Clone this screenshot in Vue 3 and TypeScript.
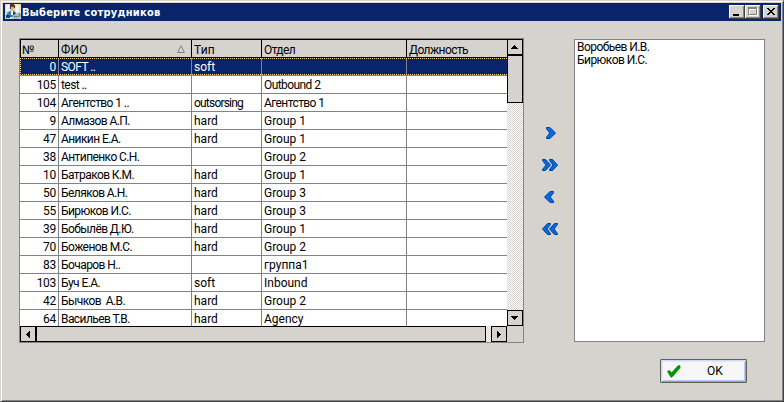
<script setup lang="ts">
import { ref } from 'vue'

interface Employee {
  id: number
  name: string
  kind: string
  unit: string
}

const employees: Employee[] = [
  { id: 0, name: 'SOFT ..', kind: 'soft', unit: '' },
  { id: 105, name: 'test ..', kind: '', unit: 'Outbound 2' },
  { id: 104, name: 'Агентство 1 ..', kind: 'outsorsing', unit: 'Агентство 1' },
  { id: 9, name: 'Алмазов А.П.', kind: 'hard', unit: 'Group 1' },
  { id: 47, name: 'Аникин Е.А.', kind: 'hard', unit: 'Group 1' },
  { id: 38, name: 'Антипенко С.Н.', kind: '', unit: 'Group 2' },
  { id: 10, name: 'Батраков К.М.', kind: 'hard', unit: 'Group 1' },
  { id: 50, name: 'Беляков А.Н.', kind: 'hard', unit: 'Group 3' },
  { id: 55, name: 'Бирюков И.С.', kind: 'hard', unit: 'Group 3' },
  { id: 39, name: 'Бобылёв Д.Ю.', kind: 'hard', unit: 'Group 1' },
  { id: 70, name: 'Боженов М.С.', kind: 'hard', unit: 'Group 2' },
  { id: 83, name: 'Бочаров Н..', kind: '', unit: 'группа1' },
  { id: 103, name: 'Буч Е.А.', kind: 'soft', unit: 'Inbound' },
  { id: 42, name: 'Бычков  А.В.', kind: 'hard', unit: 'Group 2' },
  { id: 64, name: 'Васильев Т.В.', kind: 'hard', unit: 'Agency' },
]
const chosen = ['Воробьев И.В.', 'Бирюков И.С.']
const selectedId = ref(0)

// Longer captions are set tighter than the short ones.
const isLong = (text: string) => text.length > 7

const right = 'M.5.5H4L9.5 6 4 11.5H.5V10.2L3.8 6 .5 1.8z'
const left = 'M9.5.5H6L.5 6 6 11.5H9.5V10.2L6.2 6 9.5 1.8z'
const right2 = 'M.5.5H3.5L8.5 6 3.5 11.5H.5V10.5L4 6 .5 1.5zM7.5.5H10.5L15.5 6 10.5 11.5H7.5V10.5L11 6 7.5 1.5z'
const left2 = 'M8.5.5H5.5L.5 6 5.5 11.5H8.5V10.5L5 6 8.5 1.5zM15.5.5H12.5L7.5 6 12.5 11.5H15.5V10.5L12 6 15.5 1.5z'
const moves = [
  { label: 'add', d: right, x: 5 },
  { label: 'addAll', d: right2, x: 1 },
  { label: 'remove', d: left, x: 3 },
  { label: 'removeAll', d: left2, x: 1 },
]
</script>

<template>
  <div class="window">
    <header class="title">
      <svg class="app-icon" width="17" height="17" viewBox="0 0 17 17">
        <path fill="#d4dedf" d="M0 1h16v15H0z" />
        <path fill="#e9e0b9" d="M9 1h7v9H9z" />
        <path fill="#f5f3e8" d="M11 2h3v7h-3zM1 2h3v6H1z" />
        <path fill="#4b3e33" d="M5 1h4v1h1v3H8V4H6v2H5z" />
        <path fill="#dcb58d" d="M6 4h3v4H6z" />
        <path fill="#3b80b8" d="M2 10l3-2h4l2 2v4H2z" />
        <path fill="#174574" d="M1 12h4v3H1zM8 9h2v4H8z" />
        <path fill="#f7fbff" d="M6 8h2v4H6z" />
        <path fill="#aeb9bd" d="M8 12l6-2 2 1v3l-3 2H8z" />
        <path fill="#65777d" d="M9 13h4v1H9zM14 10h1v3h-1z" />
        <path fill="#62a354" d="M12 13h3v1h-3z" />
      </svg>
      <span class="caption">Выберите сотрудников</span>
      <button class="sys"><svg width="16" height="14" shape-rendering="crispEdges"><path d="M4 9h6v2H4z" /></svg></button>
      <button class="sys"><svg width="16" height="14" shape-rendering="crispEdges"><path fill="#fff" d="M4 3h9v8H4z" /><path fill="#848284" d="M3 2h9v8H3z" /><path fill="#fff" d="M4 4h7v5H4z" /><path fill="#d6d3ce" d="M5 5h6v4H5z" /></svg></button>
      <button class="sys close"><svg width="16" height="14" shape-rendering="crispEdges"><path d="M4 3h2v1h1v1h2V4h1V3h2v1h-1v1h-1v1H9v1h1v1h1v1h1v1h-2V9H9V8H7v1H6v1H4V9h1V8h1V7h1V6H6V5H5V4H4z" /></svg></button>
    </header>

    <main class="content">
      <section class="grid-box">
        <div class="table">
          <div class="row head">
            <span>№</span>
            <span>ФИО<svg class="sort" width="8" height="8" viewBox="0 0 8 8"><path d="M.6 7.5h6.8L4 .7z" fill="none" stroke="#848284" /></svg></span>
            <span>Тип</span><span class="tight">Отдел</span><span class="tight">Должность</span>
          </div>
          <div
            v-for="e in employees" :key="e.id" class="row"
            :class="{ selected: e.id === selectedId }" @click="selectedId = e.id"
          >
            <span class="num">{{ e.id }}</span><span class="tight">{{ e.name }}</span>
            <span :class="{ tighter: isLong(e.kind) }">{{ e.kind }}</span>
            <span :class="{ tight: isLong(e.unit) }">{{ e.unit }}</span><span></span>
          </div>
        </div>
        <div class="vbar">
          <button class="arrow"><svg width="14" height="14" shape-rendering="crispEdges"><path d="M6 5h1v1h1v1h1v1h1v1H3V8h1V7h1V6h1z" /></svg></button>
          <div class="vthumb"></div>
          <button class="arrow end"><svg width="14" height="14" shape-rendering="crispEdges"><path d="M3 5h7v1H9v1H8v1H7v1H6V8H5V7H4V6H3z" /></svg></button>
        </div>
        <div class="hbar">
          <button class="arrow"><svg width="14" height="14" shape-rendering="crispEdges"><path d="M9 4v7H8v-1H7V9H6V8H5V7h1V6h1V5h1V4z" /></svg></button>
          <div class="hthumb"></div>
          <button class="arrow end"><svg width="14" height="14" shape-rendering="crispEdges"><path d="M5 4v7h1v-1h1V9h1V8h1V7H8V6H7V5H6V4z" /></svg></button>
        </div>
      </section>

      <nav class="moves">
        <button v-for="m in moves" :key="m.label" class="move">
          <svg width="18" height="12" viewBox="0 0 18 12">
            <path :d="m.d" :transform="`translate(${m.x} 0)`" fill="#0869de" stroke="#00419c" stroke-width="1" />
          </svg>
        </button>
      </nav>

      <ul class="chosen">
        <li v-for="name in chosen" :key="name">{{ name }}</li>
      </ul>
    </main>

    <footer class="actions">
      <button class="ok">
        <svg width="14" height="13" viewBox="0 0 14 13">
          <path fill="#009a00" stroke="#007500" stroke-width=".7" d="M.5 6.5L2.5 5.5 4.5 8 11 .8h2v2L5.5 11.5 4 12.3z" />
        </svg>
        <span>OK</span>
      </button>
    </footer>
  </div>
</template>

<style>
body { margin: 0; overflow: hidden; }
</style>

<style scoped>
* { box-sizing: border-box; }
button { padding: 0; margin: 0; border: 0; border-radius: 0; font: inherit; color: #000; }
svg { display: block; flex: none; }
.window {
  width: 784px; height: 402px; padding: 1px; background: #d6d3ce;
  border: 1px solid; border-color: #d6d3ce #424142 #424142 #d6d3ce;
  box-shadow: inset 1px 1px #fff, inset -1px -1px #848284;
  font: 12px/14px Roboto, "Liberation Sans", sans-serif; color: #000;
  display: flex; flex-direction: column;
}
.title { height: 18px; margin: 1px 1px 0 1px; background: #08246b; display: flex; align-items: flex-start; padding-right: 2px; }
.app-icon { margin-left: 2px; }
.caption { flex: 1; font: bold 11px/19px "DejaVu Sans Condensed", "DejaVu Sans", sans-serif; font-stretch: condensed; letter-spacing: .25px; color: #fff; white-space: nowrap; }
.sys { width: 16px; height: 14px; margin-top: 2px; background: #d6d3ce; box-shadow: inset -1px -1px #424142, inset 1px 1px #fff, inset -2px -2px #848284; }
.close { margin-left: 2px; }
.content { display: flex; align-items: flex-start; padding: 17px 0 0 17px; }
.grid-box {
  width: 505px; height: 305px; border: 1px solid #848284;
  display: grid; grid-template-columns: 487px 16px; grid-template-rows: 287px 16px;
}
.table { overflow: hidden; background: #fff; }
.row { display: grid; grid-template-columns: 39px 133px 70px 145px 100px; height: 18px; position: relative; }
.row > span { border-right: 1px solid #848284; border-bottom: 1px solid #848284; padding: 2px 0 0 2px; white-space: pre; }
.row > .num { text-align: right; padding: 2px 2px 0 0; letter-spacing: -.3px; }
.row > span:last-child { border-right: 0; }
.row.head { height: 19px; background: #d6d3ce; border-top: 1px solid #000; box-shadow: inset 1px 0 #000; }
.head > span { border-color: #000; padding-top: 3px; letter-spacing: .2px; display: flex; }
.row > .tight { letter-spacing: -.58px; }
.row > .tighter { letter-spacing: -.8px; }
.sort { margin: 2px 6px 0 auto; }
.selected { background: #08246b; color: #fff; }
.selected::after { content: ""; position: absolute; inset: 0 0 1px 0; border: 1px dotted #f7db94; border-right: 0; }
.vbar, .hbar { background: repeating-conic-gradient(#fff 0 25%, #d6d3ce 0 50%) 0 0 / 2px 2px; display: flex; }
.vbar { flex-direction: column; }
.arrow { width: 16px; height: 16px; border: 1px solid #000; background: #d6d3ce; flex: none; }
.vthumb { height: 48px; border: 1px solid #000; background: #d6d3ce; }
.hthumb { width: 450px; border: 1px solid #000; background: #d6d3ce; }
.vbar .end { margin-top: auto; }
.hbar .end { margin-left: auto; }
.moves { width: 50px; padding: 89px 0 0 17px; display: flex; flex-direction: column; gap: 20px; }
.move { width: 18px; height: 12px; background: none; }
.chosen { width: 191px; height: 303px; margin: 1px 0 0; padding: 1px 0 0 2px; list-style: none; background: #fff; border: 1px solid #848284; line-height: 13px; letter-spacing: -.55px; }
.actions { display: flex; justify-content: flex-end; padding: 16px 35px 0 0; }
.ok {
  width: 87px; height: 24px; border: 1px solid #63614a; border-radius: 1px; background: #f7f7f7;
  box-shadow: inset 1px 1px #cedbff, inset -1px -1px #8ca2e7, inset 2px 2px #dee7ff, inset -2px -2px #b5c7ff;
  display: flex; align-items: center; padding-left: 6px;
}
.ok span { margin-left: 26px; }
</style>
